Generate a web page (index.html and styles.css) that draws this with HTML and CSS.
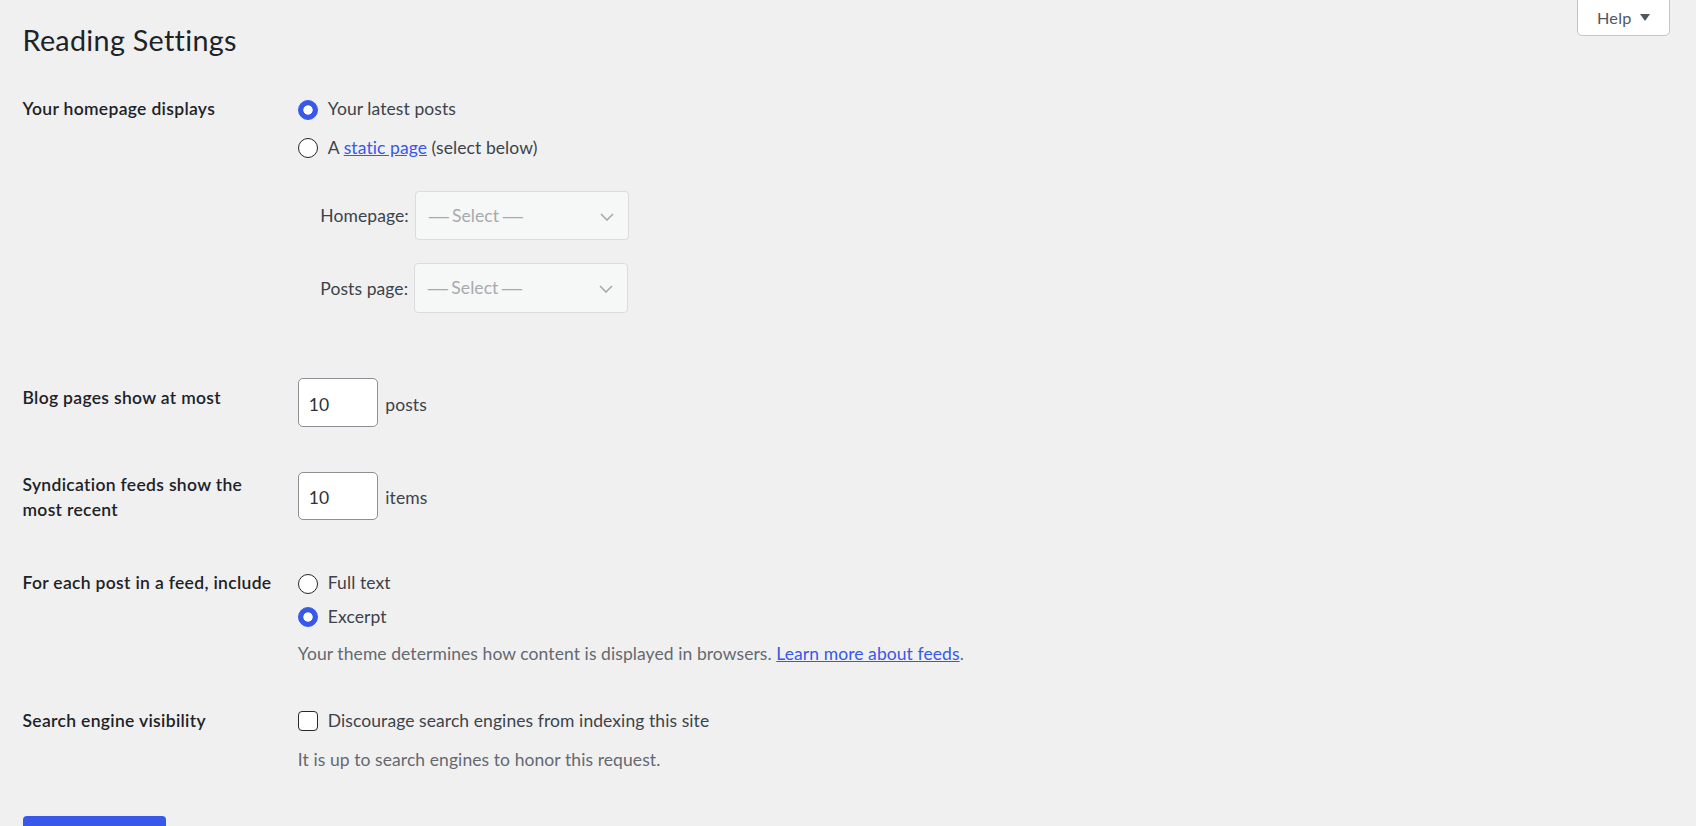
FILE: index.html
```html
<!DOCTYPE html>
<html lang="en">
<head>
<meta charset="utf-8">
<title>Reading Settings</title>
<link rel="stylesheet" href="styles.css">
</head>
<body>
<div class="wrap">
  <div class="header">
    <h1 class="title">Reading Settings</h1>
    <button class="help-tab" type="button"><span>Help</span><svg class="help-arrow" width="10" height="7" viewBox="0 0 10 7"><path d="M0 0h10L5 7z"/></svg></button>
  </div>

  <form class="settings">
    <div class="row row-home">
      <div class="th">Your homepage displays</div>
      <div class="td">
        <div class="options options-home">
          <label class="opt"><input class="radio" type="radio" name="show_on_front" checked><span>Your latest posts</span></label>
          <label class="opt"><input class="radio" type="radio" name="show_on_front"><span>A <a class="link" href="#">static page</a> (select below)</span></label>
        </div>
        <ul class="page-selects">
          <li class="sel-row"><span class="sel-label">Homepage:</span><div class="select"><span><span class="dash">—</span> Select <span class="dash">—</span></span><svg class="chev" width="14" height="8" viewBox="0 0 14 8"><path d="M1 1l6 6 6-6"/></svg></div></li>
          <li class="sel-row"><span class="sel-label">Posts page:</span><div class="select"><span><span class="dash">—</span> Select <span class="dash">—</span></span><svg class="chev" width="14" height="8" viewBox="0 0 14 8"><path d="M1 1l6 6 6-6"/></svg></div></li>
        </ul>
      </div>
    </div>

    <div class="row row-blog">
      <div class="th th-low">Blog pages show at most</div>
      <div class="td inline"><input class="num" type="text" value="10"><span class="unit">posts</span></div>
    </div>

    <div class="row row-feed">
      <div class="th">Syndication feeds show the<br>most recent</div>
      <div class="td inline"><input class="num" type="text" value="10"><span class="unit">items</span></div>
    </div>

    <div class="row row-use">
      <div class="th">For each post in a feed, include</div>
      <div class="td">
        <div class="options options-feed">
          <label class="opt"><input class="radio" type="radio" name="rss_use_excerpt"><span>Full text</span></label>
          <label class="opt"><input class="radio" type="radio" name="rss_use_excerpt" checked><span>Excerpt</span></label>
        </div>
        <p class="desc desc-feed">Your theme determines how content is displayed in browsers. <a class="link" href="#">Learn more about feeds</a>.</p>
      </div>
    </div>

    <div class="row row-search">
      <div class="th">Search engine visibility</div>
      <div class="td">
        <label class="opt"><input class="check" type="checkbox"><span>Discourage search engines from indexing this site</span></label>
        <p class="desc desc-search">It is up to search engines to honor this request.</p>
      </div>
    </div>

    <button class="primary" type="button" aria-label="Save Changes"></button>
  </form>
</div>
</body>
</html>
```
FILE: styles.css
```css
* { box-sizing: border-box; }

html { overflow: hidden; }

body {
  margin: 0;
  background: #f0f0f1;
  color: #3c434a;
  font-family: Lato, "Segoe UI", "Liberation Sans", Arial, sans-serif;
  font-size: 17.5px;
  line-height: 25px;
}

.wrap {
  padding-left: 22.5px;
}

.header {
  display: flex;
  justify-content: space-between;
  align-items: flex-start;
  padding-right: 26px;
}

.title {
  margin: 20px 0 0;
  font-size: 28.75px;
  line-height: 40px;
  font-weight: 400;
  letter-spacing: 0.3px;
  color: #1d2327;
}

.help-tab {
  margin-top: -1px;
  height: 37px;
  width: 93px;
  display: flex;
  align-items: center;
  gap: 9px;
  padding: 0 0 0 19px;
  background: #fff;
  border: 1px solid #c3c4c7;
  border-radius: 0 0 5px 5px;
  font-family: inherit;
  font-size: 16.25px;
  letter-spacing: 0.2px;
  color: #50575e;
}

.help-arrow path { fill: #50575e; }

.settings { margin: 0; }

.row {
  display: flex;
  align-items: flex-start;
}

.th {
  flex: 0 0 275.3px;
  font-weight: 600;
  letter-spacing: 0.32px;
  line-height: 25.5px;
  color: #1d2327;
}

.td {
  flex: 1;
  min-width: 0;
  letter-spacing: 0.08px;
}

.row-home { margin-top: 36px; }
.row-blog { margin-top: 65.7px; }
.th-low { padding-top: 6.4px; }
.row-feed { margin-top: 45px; }
.row-use { margin-top: 47.3px; }
.row-search { margin-top: 42.4px; }

.options {
  display: flex;
  flex-direction: column;
}
.options-home { gap: 13.5px; }
.options-feed { gap: 8.5px; }

.opt {
  display: flex;
  align-items: center;
  height: 25px;
  gap: 10px;
}

.radio {
  appearance: none;
  -webkit-appearance: none;
  margin: 2px 0 0;
  width: 20px;
  height: 20px;
  flex: none;
  border-radius: 50%;
  border: 1.3px solid #23282d;
  background: #fff;
}

.radio:checked {
  border-color: #3858e9;
  background: radial-gradient(circle, #fff 0 4.3px, #3858e9 5px);
}

.check {
  appearance: none;
  -webkit-appearance: none;
  margin: 0;
  width: 20px;
  height: 20px;
  flex: none;
  border-radius: 4px;
  border: 1.3px solid #23282d;
  background: #fff;
}

.link {
  color: #3858e9;
  text-decoration: underline;
}

.page-selects {
  list-style: none;
  margin: 31.3px 0 0 22.5px;
  padding: 0;
  display: flex;
  flex-direction: column;
  gap: 23px;
}

.sel-row {
  display: flex;
  align-items: center;
  gap: 6px;
  color: #3c434a;
}

.select {
  width: 214px;
  height: 49.5px;
  display: flex;
  align-items: center;
  justify-content: space-between;
  padding: 0 14px 0 14px;
  background: #f6f7f7;
  border: 1px solid #dcdcde;
  border-radius: 4px;
  color: #a7aaad;
}

.dash {
  font-family: "Liberation Sans", Arial, sans-serif;
  display: inline-block;
  transform: scaleX(1.15);
}

.chev { margin-top: 2px; }
.chev path {
  fill: none;
  stroke: #a7aaad;
  stroke-width: 1.6;
}

.inline {
  display: flex;
  align-items: baseline;
}

.num {
  width: 80px;
  height: 48.5px;
  padding: 3px 10px 0;
  margin: 0;
  border: 1px solid #8c8f94;
  border-radius: 5px;
  background: #fff;
  font-family: inherit;
  font-size: 17.5px;
  color: #2c3338;
}

.unit {
  margin-left: 7.5px;
  color: #3c434a;
}

.desc {
  margin: 0;
  color: #646970;
}
.desc-feed { margin-top: 12.2px; }
.desc-search { margin-top: 14.1px; }

.primary {
  display: block;
  margin-top: 43.9px;
  margin-left: 0.5px;
  width: 143px;
  height: 45px;
  padding: 0;
  border: 0;
  border-radius: 4px;
  background: #3858e9;
}
```
